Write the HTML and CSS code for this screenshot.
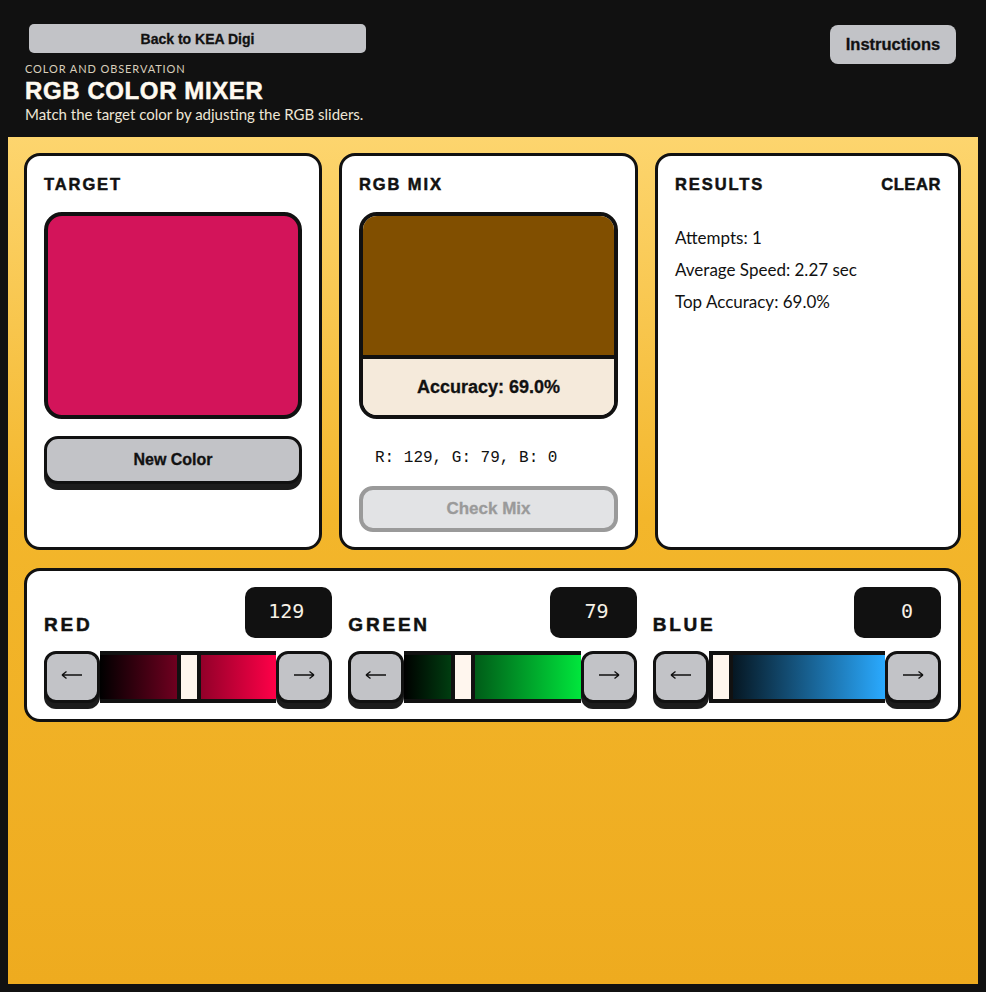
FILE: index.html
```html
<!DOCTYPE html>
<html>
<head lang="en">
    <meta charset="UTF-8">
    <title>RGB Color Mixer</title>
    <link rel="stylesheet" href="styles.css">
</head>
<body>
<header id="top">
    <div class="intro">
        <button class="back">Back to KEA Digi</button>
        <p class="eyebrow">COLOR AND OBSERVATION</p>
        <h1>RGB COLOR MIXER</h1>
        <p class="lead">Match the target color by adjusting the RGB sliders.</p>
    </div>
    <button class="help">Instructions</button>
</header>
<main id="game">
    <div class="cards">
        <section class="card">
            <h2>TARGET</h2>
            <div class="swatch target"></div>
            <button class="btn">New Color</button>
        </section>
        <section class="card">
            <h2>RGB MIX</h2>
            <div class="mix">
                <div class="mix-color"></div>
                <div class="accuracy">Accuracy: 69.0%</div>
            </div>
            <p class="values">R: 129, G: 79, B: 0</p>
            <button class="btn check" disabled>Check Mix</button>
        </section>
        <section class="card">
            <div class="card-head">
                <h2>RESULTS</h2>
                <h2 class="clear">CLEAR</h2>
            </div>
            <ul class="stats">
                <li>Attempts: 1</li>
                <li>Average Speed: 2.27 sec</li>
                <li>Top Accuracy: 69.0%</li>
            </ul>
        </section>
    </div>
    <section class="sliders">
        <div class="channel">
            <div class="channel-head">
                <h3>RED</h3>
                <div class="value">129</div>
            </div>
            <div class="slider">
                <button class="arrow"><svg viewBox="0 0 22 10"><path d="M1 5H21M1 5L5.5 1.5M1 5L5.5 8.5"/></svg></button>
                <div class="track red"><span class="thumb" style="left: 77px"></span></div>
                <button class="arrow"><svg viewBox="0 0 22 10"><path d="M1 5H21M21 5L16.5 1.5M21 5L16.5 8.5"/></svg></button>
            </div>
        </div>
        <div class="channel">
            <div class="channel-head">
                <h3>GREEN</h3>
                <div class="value">79</div>
            </div>
            <div class="slider">
                <button class="arrow"><svg viewBox="0 0 22 10"><path d="M1 5H21M1 5L5.5 1.5M1 5L5.5 8.5"/></svg></button>
                <div class="track green"><span class="thumb" style="left: 47px"></span></div>
                <button class="arrow"><svg viewBox="0 0 22 10"><path d="M1 5H21M21 5L16.5 1.5M21 5L16.5 8.5"/></svg></button>
            </div>
        </div>
        <div class="channel">
            <div class="channel-head">
                <h3>BLUE</h3>
                <div class="value">0</div>
            </div>
            <div class="slider">
                <button class="arrow"><svg viewBox="0 0 22 10"><path d="M1 5H21M1 5L5.5 1.5M1 5L5.5 8.5"/></svg></button>
                <div class="track blue"><span class="thumb" style="left: 0px"></span></div>
                <button class="arrow"><svg viewBox="0 0 22 10"><path d="M1 5H21M21 5L16.5 1.5M21 5L16.5 8.5"/></svg></button>
            </div>
        </div>
    </section>
</main>
</body>
</html>
```

FILE: styles.css
```css
html{
    background: #111111;
}
body{
    margin: 8px;
    min-height: calc(100vh - 16px);
    display: flex;
    flex-direction: column;
    font-family: "Trebuchet MS", Lato, sans-serif;
    color: #111111;
}
button{
    font-family: "Liberation Sans", Arial, sans-serif;
    font-weight: bold;
    color: #111111;
    cursor: pointer;
    -webkit-text-stroke: 0.3px #111111;
}
#top{
    display: flex;
    justify-content: space-between;
    align-items: flex-start;
    padding: 16px 22px 13px 17px;
}
.back{
    width: 337px;
    height: 29px;
    margin-left: 4px;
    border: none;
    border-radius: 5px;
    background: #c2c3c7;
    font-size: 14px;
}
.eyebrow{
    margin: 9px 0 0;
    font-size: 11px;
    line-height: 13px;
    letter-spacing: 0.9px;
    color: #d9cfbc;
}
h1{
    margin: 2px 0 0;
    font-family: "Liberation Sans", Arial, sans-serif;
    font-size: 24px;
    line-height: 28px;
    letter-spacing: 0.6px;
    color: #fffaf0;
    -webkit-text-stroke: 0.5px #fffaf0;
}
.lead{
    margin: 0;
    font-size: 15px;
    line-height: 19px;
    color: #eee6d6;
}
.help{
    width: 126px;
    height: 39px;
    margin-top: 1px;
    border: none;
    border-radius: 8px;
    background: #c2c3c7;
    font-size: 16.5px;
}
#game{
    flex: 1;
    padding: 16px 17px 16px 16px;
    background: linear-gradient(180deg, #fdd56e 0%, #f3b62b 45%, #eeab1f 100%);
}
.cards{
    display: grid;
    grid-template-columns: 298px 299px 1fr;
    gap: 17px;
}
.card{
    height: 397px;
    box-sizing: border-box;
    padding: 18px 17px;
    background: #ffffff;
    border: 3px solid #111111;
    border-radius: 16px;
}
h2{
    margin: 0 0 18px;
    font-family: "Liberation Sans", Arial, sans-serif;
    font-size: 16.5px;
    line-height: 20px;
    letter-spacing: 1.9px;
    -webkit-text-stroke: 0.5px #111111;
}
.card-head{
    display: flex;
    justify-content: space-between;
}
.card-head .clear{
    letter-spacing: 0.6px;
    cursor: pointer;
}
.swatch{
    height: 207px;
    box-sizing: border-box;
    border: 4px solid #111111;
    border-radius: 18px;
}
.target{
    background: #d3145a;
}
.btn{
    display: block;
    width: 100%;
    height: 48px;
    margin-top: 17px;
    background: #c2c3c7;
    border: 3px solid #111111;
    border-radius: 14px;
    box-shadow: 0 6px 0 #1c1c1c;
    font-size: 16px;
}
.mix{
    height: 207px;
    box-sizing: border-box;
    display: flex;
    flex-direction: column;
    border: 4px solid #111111;
    border-radius: 18px;
    overflow: hidden;
}
.mix-color{
    flex: 1;
    background: rgb(129, 79, 0);
    border-bottom: 4px solid #111111;
}
.accuracy{
    height: 56px;
    line-height: 56px;
    text-align: center;
    background: #f5eadb;
    font-family: "Liberation Sans", Arial, sans-serif;
    font-weight: bold;
    font-size: 18px;
    -webkit-text-stroke: 0.3px #111111;
}
.values{
    margin: 29px 0 0 16px;
    font-family: "Liberation Mono", "Courier New", monospace;
    font-size: 16px;
    line-height: 20px;
}
.btn.check{
    height: 46px;
    margin-top: 18px;
    background: #e2e3e5;
    border: 4px solid #9a9a9a;
    box-shadow: none;
    color: #9a9a9a;
    font-size: 17px;
    -webkit-text-stroke: 0.3px #9a9a9a;
    cursor: default;
}
.stats{
    list-style: none;
    margin: 0;
    padding: 10px 0 0;
    font-size: 17px;
}
.stats li{
    line-height: 32px;
}
.sliders{
    display: grid;
    grid-template-columns: 1fr 1fr 1fr;
    gap: 16px;
    margin-top: 18px;
    padding: 16px 17px;
    background: #ffffff;
    border: 3px solid #111111;
    border-radius: 16px;
}
.channel-head{
    display: flex;
    justify-content: space-between;
    align-items: flex-end;
    margin-bottom: 13px;
}
h3{
    margin: 0 0 2px;
    font-family: "Liberation Sans", Arial, sans-serif;
    font-size: 19px;
    line-height: 22px;
    letter-spacing: 2.8px;
    -webkit-text-stroke: 0.5px #111111;
}
.value{
    width: 87px;
    height: 51px;
    box-sizing: border-box;
    padding: 12px 28px 0 0;
    background: #111111;
    border-radius: 10px;
    color: #f7f1e6;
    font-family: "DejaVu Sans Mono", monospace;
    font-weight: 300;
    font-size: 20px;
    text-align: right;
}
.slider{
    display: flex;
    height: 52px;
}
.arrow{
    width: 56px;
    height: 52px;
    flex: none;
    display: flex;
    align-items: center;
    justify-content: center;
    padding: 0 0 4px;
    background: #c2c3c7;
    border: 3px solid #111111;
    border-radius: 12px;
    box-shadow: 0 6px 0 #1c1c1c;
}
.arrow svg{
    width: 22px;
    height: 10px;
    fill: none;
    stroke: #111111;
    stroke-width: 1.4;
}
.track{
    flex: 1;
    position: relative;
    border-top: 4px solid #111111;
    border-bottom: 4px solid #111111;
}
.red{
    background: linear-gradient(90deg, #000000, #ff0048);
}
.green{
    background: linear-gradient(90deg, #000000, #00e63c);
}
.blue{
    background: linear-gradient(90deg, #000000, #2aaaff);
}
.thumb{
    position: absolute;
    top: 0;
    bottom: 0;
    width: 16px;
    background: #fff6ee;
    border-left: 4px solid #111111;
    border-right: 4px solid #111111;
}
```
